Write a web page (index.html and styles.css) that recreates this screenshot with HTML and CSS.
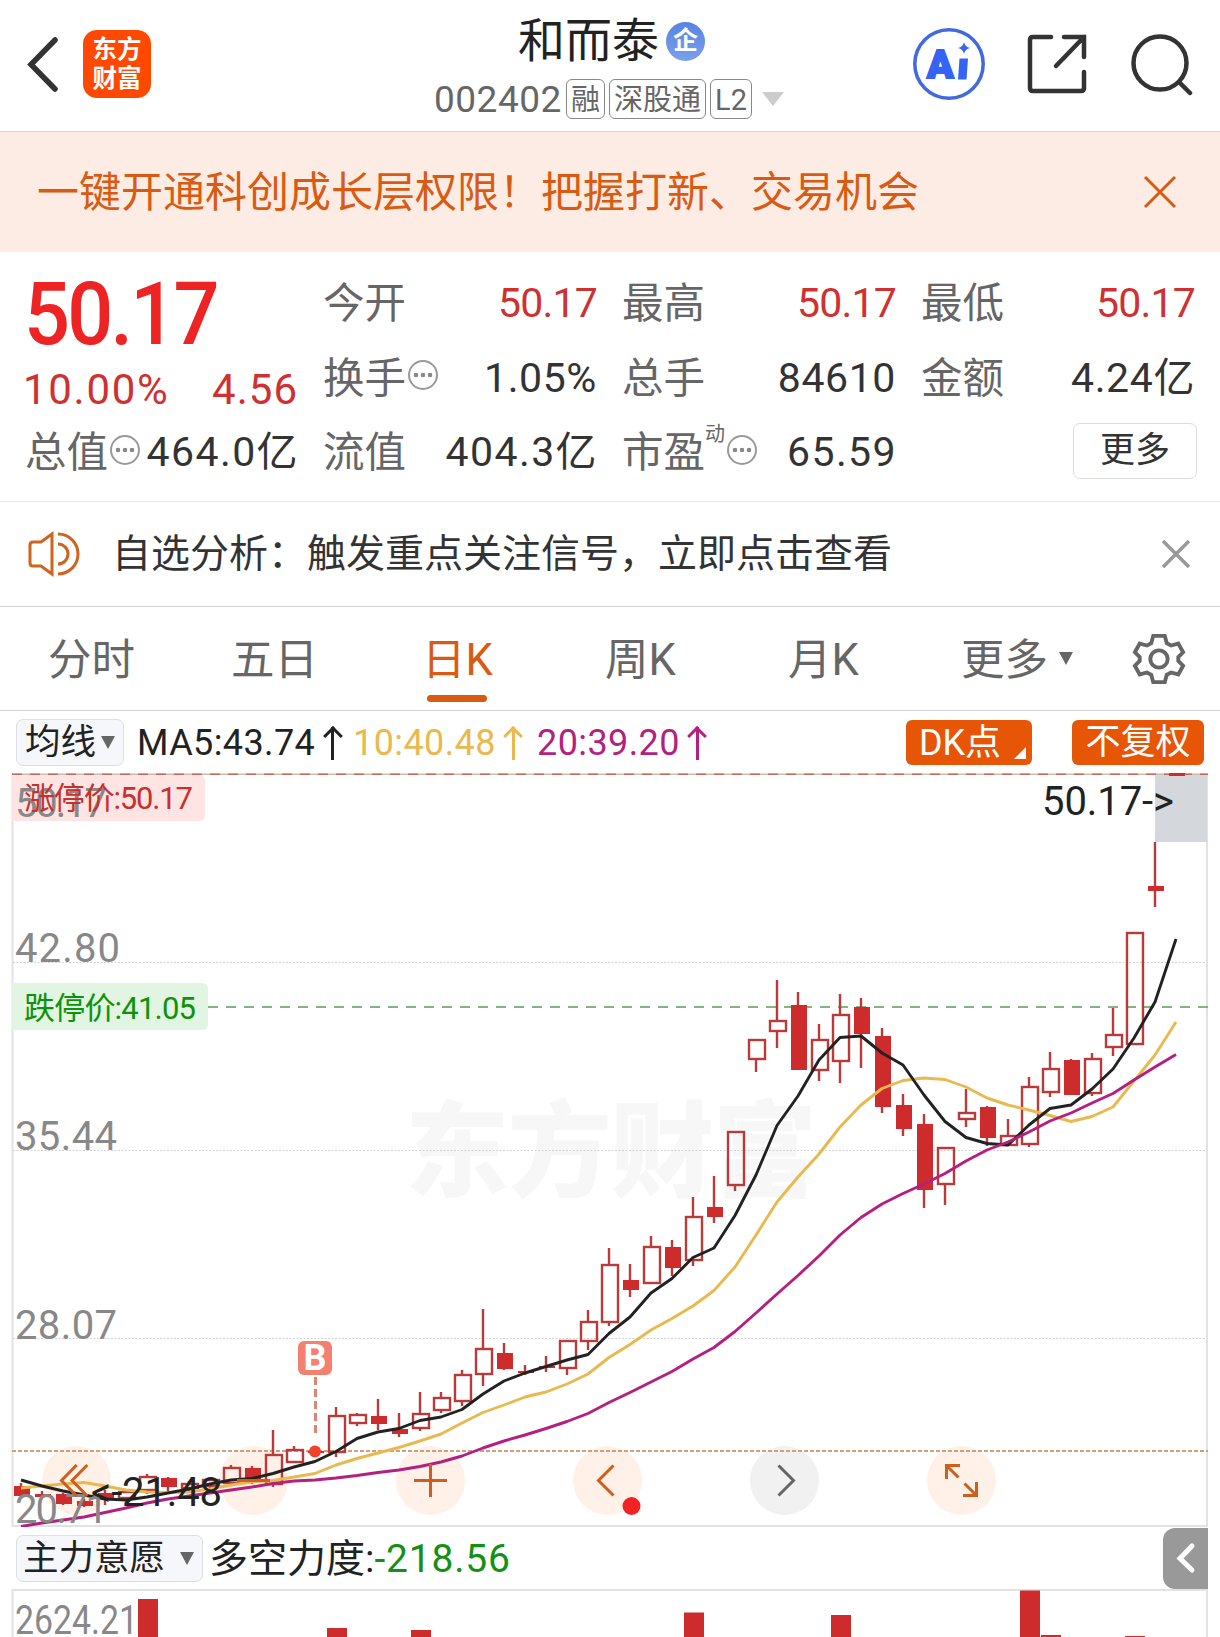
FILE: index.html
```html
<!DOCTYPE html>
<html lang="zh-CN">
<head>
    <meta charset="UTF-8">
    <meta name="viewport" content="width=device-width, initial-scale=1.0">
    <title>和而泰 002402</title>
    <link rel="stylesheet" href="styles.css">
</head>
<body>
    <header class="header">
        <div class="header-left">
            <svg class="back" width="34" height="60" viewBox="0 0 34 60"><path d="M30 6 6 30.500 30 55"/></svg>
            <div class="logo"><span>东方</span><span>财富</span></div>
        </div>
        <div class="header-title">
            <div class="stock-name">和而泰<span class="badge">企</span></div>
            <div class="stock-code">
                <span class="code">002402</span>
                <span class="tag">融</span>
                <span class="tag">深股通</span>
                <span class="tag">L2</span>
                <svg class="code-arrow" width="22" height="14" viewBox="0 0 22 14"><path d="M0 0h22L11 14z" fill="#ccc"/></svg>
            </div>
        </div>
        <div class="header-right">
            <svg width="74" height="74" viewBox="0 0 74 74">
                <circle cx="37" cy="37" r="34.200" fill="none" stroke="#4169e1" stroke-width="3.500"/>
                <text class="ai-text" x="15" y="51">A</text>
                <path d="M47.500 31.500h8.500l-1.500 21h-8.500zM52 15q1 5 6 6-5 1-6 6-1-5-6-6 5-1 6-6z" fill="#3463f5"/>
            </svg>
            <svg class="line-icon" width="62" height="62" viewBox="0 0 62 62">
                <path d="M24 4H6q-3 0-3 3v48q0 3 3 3h48q3 0 3-3V39M37 4h20v20M57 4 29 33"/>
            </svg>
            <svg class="line-icon" width="62" height="64" viewBox="0 0 62 64">
                <circle cx="29" cy="31" r="26.500"/><path d="m48 50 11 11"/>
            </svg>
        </div>
    </header>

    <div class="banner">
        <span>一键开通科创成长层权限！把握打新、交易机会</span>
        <svg width="34" height="34" viewBox="0 0 34 34"><path d="m2 2 30 30M32 2 2 32"/></svg>
    </div>

    <section class="quote">
        <div class="quote-main">
            <div class="price">50.17</div>
            <div class="change"><span class="percent">10.00%</span><span>4.56</span></div>
            <div class="cell"><label>总值</label><i class="info"></i><b class="loose">464.0亿</b></div>
        </div>
        <div class="quote-col">
            <div class="cell"><label>今开</label><b class="red">50.17</b></div>
            <div class="cell"><label>换手</label><i class="info"></i><b>1.05%</b></div>
            <div class="cell"><label>流值</label><b class="loose">404.3亿</b></div>
        </div>
        <div class="quote-col">
            <div class="cell"><label>最高</label><b class="red">50.17</b></div>
            <div class="cell"><label>总手</label><b>84610</b></div>
            <div class="cell"><label>市盈</label><sup>动</sup><i class="info"></i><b class="loose">65.59</b></div>
        </div>
        <div class="quote-col">
            <div class="cell"><label>最低</label><b class="red">50.17</b></div>
            <div class="cell"><label>金额</label><b>4.24亿</b></div>
            <div class="cell"><button class="more-btn">更多</button></div>
        </div>
    </section>

    <div class="notice">
        <svg class="speaker" width="52" height="46" viewBox="0 0 52 46">
            <path d="M24 3 13 11H5q-3 0-3 3v18q0 3 3 3h8l11 8zM30 3a20 20 0 0 1 0 40M30 13a10 10 0 0 1 0 20"/>
        </svg>
        <span>自选分析：触发重点关注信号，立即点击查看</span>
        <svg class="notice-close" width="32" height="32" viewBox="0 0 32 32"><path d="m3 3 26 26M29 3 3 29"/></svg>
    </div>

    <nav class="tabs">
        <a>分时</a>
        <a>五日</a>
        <a class="active">日K</a>
        <a>周K</a>
        <a>月K</a>
        <a class="tab-more">更多<span class="caret"></span></a>
        <svg class="gear" width="54" height="54" viewBox="-28 -27 56 54">
            <path d="M-6-24H6L8-16.500 12.500-14 20-16 25-7 20-2V2L25 7 20 16 12.500 14 8 16.500 6 24H-6L-8 16.500-12.500 14-20 16-25 7-20 2V-2L-25-7-20-16-12.500-14-8-16.500z"/>
            <circle r="9"/>
        </svg>
    </nav>

    <div class="ma-row">
        <button class="select">均线<span class="caret"></span></button>
        <span class="ma ma5">MA5:43.74<i class="up"></i></span>
        <span class="ma ma10">10:40.48<i class="up"></i></span>
        <span class="ma ma20">20:39.20<i class="up"></i></span>
        <button class="orange-btn dk">DK点</button>
        <button class="orange-btn">不复权</button>
    </div>

    <svg class="kline" width="1220" height="754" viewBox="0 773 1220 754">
        <text class="watermark" x="405" y="1189" textLength="412">东方财富</text>
        <g class="frame">
            <path d="M12.500 774V1526H1207V774"/>
            <path class="grid" d="M13 962.500H1207M13 1150.500H1207M13 1338.500H1207"/>
        </g>
        <path d="M12 774.200H1208" stroke="#c9beb0" stroke-width="1.500"/>
        <path d="M12 774.200H1208" stroke="#bd6a60" stroke-width="1.500" stroke-dasharray="10 8"/>
        <rect x="1155" y="775" width="52" height="67" fill="#d4d7dc"/>
        <path d="M208 1007H1208" stroke="#7db87d" stroke-width="2" stroke-dasharray="10 8"/>
        <g class="tools">
            <circle cx="76.500" cy="1480.500" r="34.500"/>
            <circle cx="253.500" cy="1480.500" r="34.500"/>
            <circle cx="430.500" cy="1480.500" r="34.500"/>
            <circle cx="607.500" cy="1480.500" r="34.500"/>
            <circle class="off" cx="784.500" cy="1480.500" r="34.500"/>
            <circle cx="961.500" cy="1480.500" r="34.500"/>
        </g>
        <path d="M12 1451H1208" stroke="#d2a078" stroke-width="2" stroke-dasharray="4 2"/>
        <g id="candles"></g>
        <g id="averages"></g>
        <circle cx="315" cy="1451.500" r="6" fill="#f5402c"/>
        <path d="M315.500 1377V1434" stroke="#db8574" stroke-width="3" stroke-dasharray="8 4"/>
        <rect x="298" y="1341" width="34" height="34" rx="6" fill="#f4806f"/>
        <text class="buy" x="315" y="1370">B</text>
        <path d="M12 775H199q6 0 6 6V815q0 6-6 6H12z" fill="#ffe4e4"/>
        <path d="M12 983H202q6 0 6 6V1024q0 6-6 6H12z" fill="#e2f4e2"/>
        <g class="axis">
            <text x="15" y="817" textLength="92">50.17</text>
            <text x="15" y="962" textLength="105">42.80</text>
            <text x="15" y="1150" textLength="102">35.44</text>
            <text x="15" y="1339" textLength="102">28.07</text>
            <text x="15" y="1523" textLength="93">20.71</text>
        </g>
        <text class="limit" x="24" y="809" fill="#c8302e" textLength="169">涨停价:50.17</text>
        <text class="limit" x="24" y="1018.500" fill="#0b930b" textLength="172">跌停价:41.05</text>
        <text class="mark" x="1042" y="815" textLength="132">50.17-&gt;</text>
        <text class="mark" x="91" y="1506" textLength="131">&lt;-21.48</text>
        <g class="tool-icons">
            <path d="M76.700 1465 61.500 1480.500 76.700 1496M87.300 1465 72.100 1480.500 87.300 1496"/>
            <path d="M237 1480.500H270M414 1480.500H447M430.500 1464V1497"/>
            <path d="M613.500 1465.500 598.500 1480.500 613.500 1495.500"/>
            <path class="off" d="M778.500 1465.500 793.500 1480.500 778.500 1495.500"/>
            <path d="M946.500 1479V1465.500H960M946.500 1465.500 958.500 1477.500M963 1495.500H976.500V1482M976.500 1495.500 964.500 1483.500"/>
        </g>
        <circle cx="631.500" cy="1506" r="9" fill="#f22222"/>
    </svg>

    <div class="indicator-row">
        <button class="select wide">主力意愿<span class="caret"></span></button>
        <span class="force">多空力度:<em>-218.56</em></span>
        <button class="handle"><svg width="20" height="32" viewBox="0 0 20 32"><path d="M16 4 4 16.500 16 28"/></svg></button>
    </div>

    <svg class="volume" width="1220" height="48" viewBox="0 1589 1220 48">
        <path class="volume-frame" d="M12.500 1637V1590H1207V1637"/>
        <text class="volume-label" x="15" y="1634" textLength="123" lengthAdjust="spacingAndGlyphs">2624.21</text>
        <g id="bars"></g>
    </svg>

    <script src="chart.js"></script>
</body>
</html>
```

FILE: styles.css
```css
body {
    width: 1220px;
    height: 1637px;
    margin: 0;
    overflow: hidden;
    background: #fff;
    color: #333;
    font-family: Roboto, "Noto Sans CJK SC", sans-serif;
    line-height: 1.2;
}
* {
    box-sizing: border-box;
}
svg {
    display: block;
    flex: none;
}
button {
    margin: 0;
    padding: 0;
    border: 0;
    color: inherit;
    font-family: inherit;
}
i, em {
    font-style: normal;
}

.header {
    display: grid;
    grid-template-columns: 400px 1fr 400px;
    height: 132px;
    border-bottom: 1px solid #d5d5d8;
}
.header-left {
    display: flex;
    align-items: center;
    padding: 0 0 3px 25px;
}
.back {
    margin-right: 24px;
}
.back path {
    fill: none;
    stroke: #333;
    stroke-width: 5.5;
    stroke-linecap: round;
}
.logo {
    display: flex;
    flex-direction: column;
    justify-content: center;
    align-items: center;
    width: 68px;
    height: 68px;
    border-radius: 14px;
    background: #ff4800;
    color: #fff;
    font-size: 24.5px;
    font-weight: bold;
    line-height: 29px;
}
.header-title {
    padding-top: 10px;
    white-space: nowrap;
}
.stock-name {
    display: flex;
    align-items: center;
    height: 62px;
    padding-left: 118px;
    color: #222;
    font-size: 47px;
}
.badge {
    width: 39px;
    height: 39px;
    margin-left: 7px;
    border-radius: 50%;
    background: linear-gradient(#5784e4, #79a0ea);
    color: #fff;
    font-size: 25px;
    font-weight: bold;
    line-height: 38px;
    text-align: center;
}
.stock-code {
    display: flex;
    align-items: center;
    height: 53px;
    padding-left: 34px;
    color: #666;
}
.code {
    width: 132px;
    padding-top: 4px;
    font-size: 37px;
    letter-spacing: 0.5px;
}
.tag {
    height: 40px;
    margin-right: 4px;
    padding: 0 4px;
    border: 1.5px solid #888;
    border-radius: 6px;
    font-size: 29px;
    line-height: 40px;
}
.code-arrow {
    margin-left: 6px;
}
.header-right {
    display: flex;
    align-items: center;
    padding: 0 0 4px 92px;
}
.header-right svg:nth-child(2) {
    margin-left: 41px;
}
.header-right svg:nth-child(3) {
    margin-left: 42px;
}
.ai-text {
    fill: #3463f5;
    stroke: #3463f5;
    stroke-width: 2;
    font-size: 39px;
    font-weight: 900;
}
.line-icon {
    fill: none;
    stroke: #333;
    stroke-width: 4.5;
    stroke-linecap: round;
}

.banner {
    display: flex;
    justify-content: space-between;
    align-items: center;
    height: 120px;
    padding: 0 43px 0 37px;
    background: #fcece3;
    color: #d95b13;
    font-size: 42px;
}
.banner span {
    padding-top: 3px;
}
.banner path {
    stroke: #d95b13;
    stroke-width: 3;
}

.quote {
    display: grid;
    grid-template-columns: 273px 274px 274px 274px;
    column-gap: 25px;
    height: 250px;
    padding: 14px 0 0 25px;
    border-bottom: 1px solid #e6e6e6;
    white-space: nowrap;
}
.price {
    height: 92px;
    margin-left: -1px;
    color: #ee2424;
    font-size: 88px;
    font-weight: 500;
    line-height: 96px;
    letter-spacing: -3px;
    transform: scaleX(0.92);
    transform-origin: left;
}
.change {
    display: flex;
    justify-content: space-between;
    height: 57px;
    margin-left: -2px;
    color: #d03030;
    font-size: 42px;
    line-height: 64px;
    letter-spacing: 1px;
}
.percent {
    letter-spacing: 1.7px;
}
.cell {
    display: flex;
    align-items: center;
    height: 74.5px;
    font-size: 41px;
}
.cell label {
    padding-top: 2px;
    color: #666;
    font-size: 41.5px;
}
.cell b {
    margin-left: auto;
    padding-top: 1px;
    font-weight: normal;
    letter-spacing: 0.6px;
}
.cell .loose {
    margin-right: -1px;
    letter-spacing: 1.4px;
}
.cell .red {
    padding-top: 0;
    color: #d03030;
    letter-spacing: -0.8px;
}
.cell sup {
    align-self: flex-start;
    margin-top: 3px;
    color: #666;
    font-size: 20px;
    line-height: 32px;
}
.info {
    flex: none;
    width: 30px;
    height: 30px;
    margin: -5px 0 0 2px;
    border: 2px solid #999;
    border-radius: 50%;
    background:
        radial-gradient(circle, #888 2px, transparent 2.6px) -7px 0 no-repeat,
        radial-gradient(circle, #888 2px, transparent 2.6px) 0 0 no-repeat,
        radial-gradient(circle, #888 2px, transparent 2.6px) 7px 0 no-repeat;
}
.more-btn {
    width: 124px;
    height: 56px;
    margin: -2px -2px 0 auto;
    border: 1.5px solid #ddd;
    border-radius: 7px;
    background: #fff;
    font-size: 35px;
    line-height: 54px;
}

.notice {
    display: flex;
    align-items: center;
    height: 105px;
    padding: 0 28px;
    border-bottom: 1px solid #d5d5d8;
    font-size: 39px;
}
.speaker {
    margin-right: 32px;
    fill: none;
    stroke: #cf641f;
    stroke-width: 3;
}
.notice-close {
    margin-left: auto;
}
.notice-close path {
    stroke: #999;
    stroke-width: 3.5;
}

.tabs {
    display: flex;
    align-items: center;
    height: 104px;
    border-bottom: 1px solid #d5d5d8;
    color: #666;
    font-size: 43.5px;
}
.tabs a {
    display: flex;
    justify-content: center;
    align-items: center;
    width: 183px;
    height: 100%;
    padding-top: 5px;
}
.tabs .active {
    position: relative;
    color: #d95b13;
}
.active::after {
    content: "";
    position: absolute;
    bottom: 8px;
    left: 61px;
    width: 60px;
    height: 7px;
    border-radius: 4px;
    background: #d95b13;
}
.tabs .tab-more {
    width: 204px;
}
.caret {
    border: 7.5px solid transparent;
    border-top: 13px solid #666;
    border-bottom: 0;
}
.tab-more .caret {
    margin: -5px 0 0 11px;
}
.gear {
    margin-left: 13px;
    fill: none;
    stroke: #666;
    stroke-width: 4;
}

.ma-row {
    display: flex;
    align-items: center;
    height: 62px;
    padding: 0 16px;
    font-size: 36px;
    white-space: nowrap;
}
.select {
    display: flex;
    justify-content: space-between;
    align-items: center;
    width: 108px;
    height: 47px;
    padding: 0 8px;
    border: 1.5px solid #dcdfe3;
    border-radius: 7px;
    background: #f6f7fa;
    color: #222;
    font-size: 35.5px;
    line-height: 46px;
}
.ma {
    display: flex;
    align-items: center;
    padding-top: 3px;
    letter-spacing: 0.4px;
}
.ma5 {
    width: 216px;
    margin-left: 13px;
    color: #222;
}
.ma10 {
    width: 184px;
    color: #e9b94f;
}
.ma20 {
    width: 369px;
    color: #b41f80;
}
.up {
    position: relative;
    width: 3px;
    height: 33px;
    margin-left: 16px;
    background: currentColor;
}
.up::before {
    content: "";
    position: absolute;
    top: 2px;
    left: -5.5px;
    width: 11px;
    height: 11px;
    border-top: 3px solid currentColor;
    border-left: 3px solid currentColor;
    transform: rotate(45deg);
}
.orange-btn {
    width: 132px;
    height: 45px;
    border-radius: 6px;
    background: #e75506;
    color: #fff;
    font-size: 35px;
    line-height: 46px;
}
.dk {
    position: relative;
    width: 126px;
    margin-right: 40px;
    padding-right: 18px;
    font-size: 36px;
}
.dk::after {
    content: "";
    position: absolute;
    right: 6px;
    bottom: 6px;
    border-bottom: 12px solid #fff;
    border-left: 12px solid transparent;
}

.frame path {
    fill: none;
    stroke: #e2e2e4;
    stroke-width: 2;
}
.frame .grid {
    stroke: #d2d2d2;
    stroke-width: 1;
    stroke-dasharray: 2 1.5;
}
.watermark {
    fill: #f7f7f7;
    font-size: 104px;
    font-weight: 900;
}
.axis text, .volume-label {
    fill: #888;
    font-size: 40px;
}
.mark {
    fill: #222;
    font-size: 40px;
}
.limit {
    font-size: 31px;
}
.buy {
    fill: #fff;
    font-size: 36px;
    font-weight: bold;
    text-anchor: middle;
}
.tools circle {
    fill: #fff0e8;
}
.tools .off {
    fill: #f1f1f1;
}
.tool-icons {
    fill: none;
    stroke: #cf5e1c;
    stroke-width: 3;
}
.tool-icons .off {
    stroke: #666;
}
.wick, .rise {
    fill: none;
    stroke: #b93a38;
    stroke-width: 2.4;
}
.fall, .bar {
    fill: #ce2c2c;
}
.average {
    fill: none;
    stroke-width: 2.9;
    stroke-linejoin: round;
}

.indicator-row {
    display: flex;
    align-items: center;
    height: 62px;
    padding: 0 12px 0 16px;
    white-space: nowrap;
}
.wide {
    width: 187px;
    padding-left: 6px;
}
.force {
    margin-left: 6px;
    padding-top: 3px;
    color: #222;
    font-size: 39px;
}
.force em {
    color: #159015;
    letter-spacing: 0.8px;
}
.handle {
    display: flex;
    justify-content: center;
    align-items: center;
    width: 45px;
    height: 61px;
    margin-left: auto;
    border-radius: 12px 0 0 12px;
    background: #999;
}
.handle path {
    fill: none;
    stroke: #fff;
    stroke-width: 5;
    stroke-linecap: round;
}
.volume-frame {
    fill: none;
    stroke: #e2e2e4;
    stroke-width: 2;
}
```

FILE: chart.js
```javascript
const SVG = 'http://www.w3.org/2000/svg';
const STEP = 21;

// high, body top, body bottom, low, filled
const candles = [
    [1483, 1486, 1496, 1497, 1], [1491, 1494, 1497, 1498, 1], [1493, 1494, 1504, 1505, 1],
    [1499, 1501, 1506, 1507, 1], [1490, 1493, 1498, 1505, 1], [1491, 1492, 1498, 1503, 0],
    [1474, 1477, 1490, 1494, 0], [1477, 1478, 1487, 1491, 1], [1481, 1484, 1488, 1491, 0],
    [1478, 1480, 1486, 1490, 0], [1465, 1468, 1483, 1486, 0], [1466, 1468, 1479, 1484, 1],
    [1430, 1455, 1484, 1487, 0], [1446, 1450, 1462, 1463, 0], [1446, 1451, 1453, 1457, 1],
    [1407, 1416, 1452, 1457, 0], [1413, 1415, 1423, 1426, 0], [1399, 1416, 1424, 1430, 1],
    [1413, 1429, 1434, 1437, 1], [1392, 1414, 1428, 1431, 0], [1392, 1398, 1410, 1413, 0],
    [1370, 1375, 1401, 1406, 0], [1309, 1349, 1374, 1386, 0], [1343, 1353, 1369, 1370, 1],
    [1365, 1371, 1373, 1375, 1], [1356, 1366, 1368, 1372, 1], [1341, 1341, 1368, 1375, 0],
    [1310, 1322, 1341, 1350, 0], [1248, 1265, 1322, 1326, 0], [1264, 1280, 1290, 1297, 1],
    [1236, 1247, 1283, 1283, 0], [1240, 1247, 1268, 1276, 1], [1197, 1217, 1260, 1266, 0],
    [1176, 1207, 1217, 1223, 1], [1132, 1132, 1185, 1191, 0], [1040, 1040, 1059, 1072, 0],
    [980, 1021, 1031, 1048, 0], [992, 1005, 1070, 1070, 1], [1024, 1040, 1070, 1081, 0],
    [994, 1015, 1061, 1083, 0], [998, 1007, 1034, 1068, 1], [1028, 1036, 1107, 1113, 1],
    [1094, 1105, 1129, 1136, 1], [1114, 1124, 1190, 1208, 1], [1148, 1148, 1184, 1205, 0],
    [1089, 1113, 1119, 1127, 0], [1106, 1107, 1138, 1146, 1], [1119, 1136, 1145, 1145, 0],
    [1077, 1087, 1144, 1147, 0], [1052, 1069, 1092, 1097, 0], [1059, 1060, 1095, 1095, 1],
    [1053, 1059, 1093, 1096, 0], [1008, 1035, 1047, 1056, 0], [933, 933, 1044, 1044, 0],
    [842, 886, 891, 907, 1], [773, 773, 776, 776, 1]
];

const averages = {
    '#e9b94f': [
        1488, 1486, 1484, 1482.5, 1486, 1490, 1492, 1492.5, 1492, 1489, 1485, 1482, 1480.5, 1477,
        1473.5, 1465, 1458.5, 1453, 1447.5, 1441, 1434, 1423, 1412.5, 1405, 1397, 1392, 1384, 1374,
        1357.5, 1344.5, 1330, 1318.5, 1306, 1290.5, 1267, 1235, 1202, 1177, 1154, 1127, 1105, 1088.5,
        1080.5, 1078, 1079.5, 1087, 1098, 1105, 1110, 1115.5, 1121.5, 1116.5, 1107, 1081, 1055, 1022
    ],
    '#222': [
        1480, 1486, 1491, 1495, 1499, 1500, 1497, 1493, 1489, 1484, 1480, 1478.5, 1473.5, 1467,
        1461.5, 1451.5, 1438.5, 1432, 1428.5, 1420.5, 1417, 1409.5, 1394, 1381, 1373, 1366.5, 1360, 1354.5,
        1333.5, 1317, 1293, 1278.5, 1257.5, 1248, 1215.5, 1175, 1125.5, 1096, 1060, 1037.5, 1036, 1053,
        1065, 1095, 1121.5, 1137.5, 1143.5, 1145, 1125, 1108.5, 1105, 1089, 1069, 1038, 1002, 939
    ],
    '#b41f80': [
        1526.5, 1523, 1520, 1517, 1512.5, 1508, 1503, 1499, 1496, 1493, 1490, 1487, 1483.5, 1481,
        1480, 1478, 1475.5, 1472.5, 1470, 1466.5, 1462, 1456, 1448, 1441, 1435, 1428.5, 1421.5, 1413.5,
        1402.5, 1392.5, 1382, 1371.5, 1359, 1347.5, 1331.5, 1313, 1294, 1275.5, 1256, 1235, 1217.5, 1204,
        1193.5, 1184, 1173.5, 1161, 1150, 1142, 1132, 1121, 1113, 1103, 1093.5, 1080, 1067, 1054.5
    ]
};

// left edge, top
const bars = [
    [138, 1599], [327, 1628], [411, 1630], [684, 1612.5], [831, 1615],
    [1020, 1590.5], [1041, 1635], [1125, 1636]
];

function draw(parent, name, attrs) {
    const el = document.createElementNS(SVG, name);
    for (const key in attrs) {
        el.setAttribute(key, attrs[key]);
    }
    document.getElementById(parent).appendChild(el);
}

candles.forEach(([high, top, bottom, low, filled], i) => {
    const x = (i + 1) * STEP;
    draw('candles', 'path', { class: 'wick', d: `M${x} ${high}V${top}M${x} ${bottom}V${low}` });
    draw('candles', 'rect', {
        class: filled ? 'fall' : 'rise',
        x: x - 7,
        y: top,
        width: 16,
        height: bottom - top
    });
});

for (const color in averages) {
    const points = averages[color].map((y, i) => `${(i + 1) * STEP},${y}`).join(' ');
    draw('averages', 'polyline', { class: 'average', stroke: color, points });
}

bars.forEach(([x, y]) => {
    draw('bars', 'rect', { class: 'bar', x, y, width: 20, height: 1637 - y });
});
```
